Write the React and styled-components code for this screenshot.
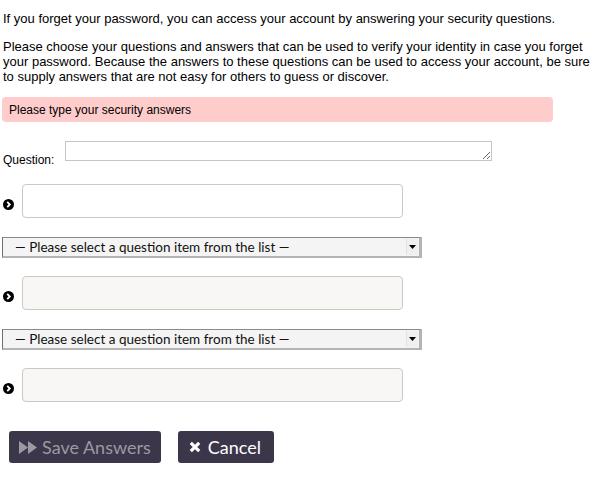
import React from "react";
import styled, { createGlobalStyle } from "styled-components";

const GlobalStyle = createGlobalStyle`
  body {
    margin: 0;
    background: #fff;
    font-family: "Liberation Sans", Arial, sans-serif;
    color: #000;
  }
`;

const Page = styled.div`
  padding: 0 2px;
  width: 596px;
`;

const Text = styled.p`
  margin: 11px 0 13px 1px;
  font-size: 13px;
  line-height: 15px;
`;

const Alert = styled.div`
  width: 551px;
  height: 25px;
  box-sizing: border-box;
  padding: 0 7px;
  display: flex;
  align-items: center;
  background: #ffcccc;
  border-radius: 4px;
  font-size: 12px;
`;

const QuestionRow = styled.div`
  display: flex;
  align-items: flex-start;
  height: 20px;
  margin-top: 19px;
`;

const Label = styled.label`
  font-size: 12px;
  line-height: 14px;
  margin: 12px 11px 0 1px;
`;

const QuestionArea = styled.textarea`
  width: 427px;
  height: 20px;
  box-sizing: border-box;
  border: 1px solid #c9c4bd;
  border-radius: 0;
  padding: 1px 3px;
  font-size: 12px;
  font-family: "Liberation Sans", Arial, sans-serif;
  outline: none;
  caret-color: #000;
`;

const AnswerRow = styled.div`
  display: flex;
  align-items: center;
  gap: 8px;
  height: 34px;
  margin-top: ${(p) => p.$top}px;
  padding-left: 1px;
`;

const BulletIcon = styled.svg`
  flex: none;
  margin-top: 6px;
`;

const AnswerInput = styled.input`
  width: 381px;
  height: 34px;
  box-sizing: border-box;
  border: 1px solid #cdc8c2;
  border-radius: 4px;
  background: ${(p) => (p.disabled ? "#f8f7f6" : "#fff")};
  padding: 0 8px;
  outline: none;
`;

const SelectBox = styled.div`
  position: relative;
  width: 420px;
  height: 21px;
  box-sizing: border-box;
  margin-top: 19px;
  border-top: 1px solid #8a8a8a;
  border-left: 1px solid #6e6e6e;
  border-right: 3px solid #b4b4b4;
  border-bottom: 2px solid #b4b4b4;
  background: #f4f4f4;
  display: flex;
  align-items: center;
`;

const Select = styled.select`
  appearance: none;
  border: none;
  background: transparent;
  width: 100%;
  height: 100%;
  padding: 0 0 0 12px;
  font-family: "Lato", "DejaVu Sans", sans-serif;
  font-size: 13.5px;
  color: #111;
  outline: none;
`;

const Arrow = styled.span`
  position: absolute;
  right: 1px;
  top: 1px;
  bottom: 1px;
  width: 11px;
  background: #f0f0f0;
  border-left: 1px solid #e2e2e2;
  display: flex;
  align-items: center;
  justify-content: center;
  pointer-events: none;
`;

const Buttons = styled.div`
  display: flex;
  gap: 17px;
  margin-top: 29px;
  padding-left: 7px;
`;

const Button = styled.button`
  display: flex;
  align-items: center;
  gap: ${(p) => p.$gap}px;
  height: 32px;
  box-sizing: border-box;
  padding: 0 ${(p) => p.$right}px 0 ${(p) => p.$left}px;
  border: none;
  border-radius: 3px;
  background: #3c364a;
  color: ${(p) => (p.disabled ? "#9b9aa0" : "#fff")};
  font-family: "Lato", "Open Sans", sans-serif;
  font-size: 18px;
  cursor: pointer;
`;

const Bullet = () => (
  <BulletIcon width="11" height="11" viewBox="0 0 12 12">
    <circle cx="6" cy="6" r="6" fill="#000" />
    <path d="M4.6 3.2 L7.4 6 L4.6 8.8" stroke="#fff" strokeWidth="2" fill="none" />
  </BulletIcon>
);

const FastForward = () => (
  <svg width="18" height="13" viewBox="0 0 18 13">
    <path d="M0 0 L9 6.5 L0 13 Z M9 0 L18 6.5 L9 13 Z" fill="#9b9aa0" />
  </svg>
);

const Cross = () => (
  <svg width="12" height="12" viewBox="0 0 12 12">
    <path d="M1.8 1.8 L10.2 10.2 M10.2 1.8 L1.8 10.2" stroke="#fff" strokeWidth="3.2" />
  </svg>
);

const Caret = () => (
  <svg width="7" height="6" viewBox="0 0 7 6">
    <path d="M0 1 L7 1 L3.5 5 Z" fill="#000" />
  </svg>
);

const Question = ({ top, disabled }) => (
  <AnswerRow $top={top}>
    <Bullet />
    <AnswerInput type="text" disabled={disabled} />
  </AnswerRow>
);

const QuestionSelect = () => (
  <SelectBox>
    <Select defaultValue="">
      <option value="">— Please select a question item from the list —</option>
    </Select>
    <Arrow>
      <Caret />
    </Arrow>
  </SelectBox>
);

export default function App() {
  return (
    <Page>
      <GlobalStyle />
      <Text>
        If you forget your password, you can access your account by answering
        your security questions.
      </Text>
      <Text>
        Please choose your questions and answers that can be used to verify
        your identity in case you forget your password. Because the answers to
        these questions can be used to access your account, be sure to supply
        answers that are not easy for others to guess or discover.
      </Text>
      <Alert>Please type your security answers</Alert>
      <QuestionRow>
        <Label>Question:</Label>
        <QuestionArea defaultValue="" autoFocus />
      </QuestionRow>
      <Question top={23} />
      <QuestionSelect />
      <Question top={18} disabled />
      <QuestionSelect />
      <Question top={18} disabled />
      <Buttons>
        <Button $left={10} $right={10} $gap={5} disabled>
          <FastForward />
          Save Answers
        </Button>
        <Button $left={11} $right={13} $gap={7}>
          <Cross />
          Cancel
        </Button>
      </Buttons>
    </Page>
  );
}
